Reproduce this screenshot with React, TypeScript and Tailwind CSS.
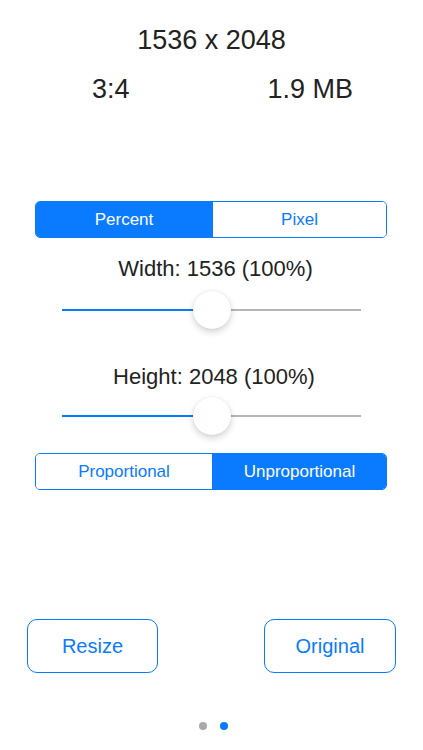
import React from "react";

const font = { fontFamily: '"Liberation Sans", Arial, sans-serif' };

function Segmented({ left, right, active }: { left: string; right: string; active: 0 | 1 }) {
  return (
    <div className="ml-[35px] flex h-[37px] w-[352px] overflow-hidden rounded-[5px] border border-[#0a7aff] text-[17px]">
      <div className={`flex w-[176px] items-center justify-center ${active === 0 ? "bg-[#0a7aff] text-white" : "bg-white text-[#0a7aff]"}`}>{left}</div>
      <div className={`flex flex-1 items-center justify-center border-l border-[#0a7aff] ${active === 1 ? "bg-[#0a7aff] text-white" : "bg-white text-[#0a7aff]"}`}>{right}</div>
    </div>
  );
}

function Slider() {
  return (
    <div className="relative ml-[62px] h-[38px] w-[299px]">
      <div className="absolute left-0 top-[18px] h-[2px] w-[150px] bg-[#0a7aff]" />
      <div className="absolute right-0 top-[18px] h-[2px] w-[149px] bg-[#b5b5b5]" />
      <div className="absolute left-[131px] top-0 h-[38px] w-[38px] rounded-full bg-white shadow-[0_3px_7px_rgba(0,0,0,0.18),0_0_0_0.5px_rgba(0,0,0,0.06)]" />
    </div>
  );
}

export default function App() {
  return (
    <div className="flex h-[750px] w-[423px] flex-col bg-white text-[#222222]" style={font}>
      <div className="pt-[24px] text-center text-[27px] leading-[32px]">1536 x 2048</div>
      <div className="mt-[17px] flex justify-between pl-[92px] pr-[70px] text-[27px] leading-[32px]">
        <span>3:4</span>
        <span>1.9 MB</span>
      </div>
      <div className="mt-[96px]">
        <Segmented left="Percent" right="Pixel" active={0} />
      </div>
      <div className="mt-[19px] pl-[8px] text-center text-[22px] leading-[24px]">Width: 1536 (100%)</div>
      <div className="mt-[10px]">
        <Slider />
      </div>
      <div className="mt-[36px] pl-[5px] text-center text-[22px] leading-[24px]">Height: 2048 (100%)</div>
      <div className="mt-[8px]">
        <Slider />
      </div>
      <div className="mt-[18px]">
        <Segmented left="Proportional" right="Unproportional" active={1} />
      </div>
      <div className="mt-[129px] flex justify-between pl-[27px] pr-[27px]">
        <div className="flex h-[54px] w-[131px] items-center justify-center rounded-[10px] border border-[#0a7aff] text-[20px] text-[#0a7aff]">Resize</div>
        <div className="flex h-[54px] w-[132px] items-center justify-center rounded-[10px] border border-[#0a7aff] text-[20px] text-[#0a7aff]">Original</div>
      </div>
      <div className="mt-[49px] flex justify-center gap-[13px] pl-[4px]">
        <div className="h-[8px] w-[8px] rounded-full bg-[#a9a9a9]" />
        <div className="h-[8px] w-[8px] rounded-full bg-[#0a7aff]" />
      </div>
    </div>
  );
}
